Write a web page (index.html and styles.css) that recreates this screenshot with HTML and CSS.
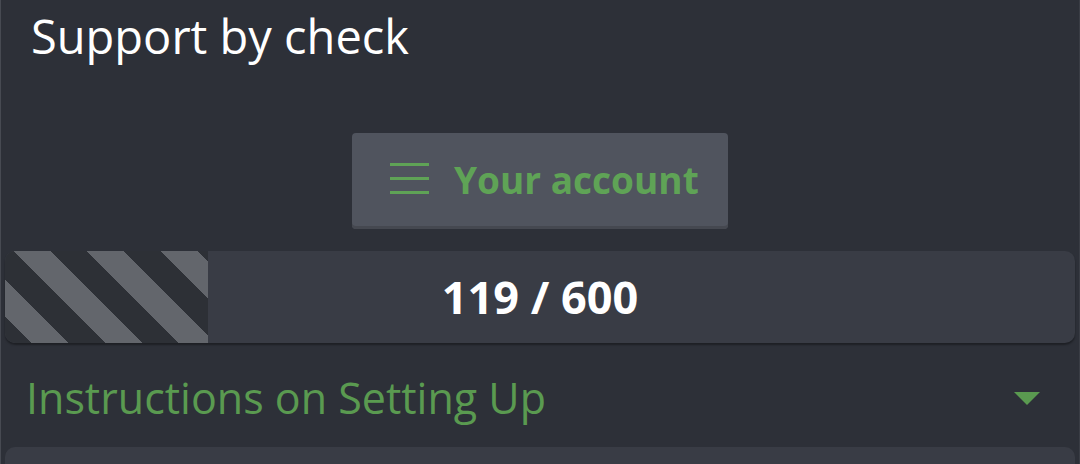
FILE: index.html
```html
<!doctype html>
<html lang="en">

<head>
  <meta charset="UTF-8">
  <meta name="viewport" content="width=device-width, initial-scale=1.0">
  <title>Support by check</title>
  <link rel="stylesheet" href="styles.css">
</head>

<body>
  <main class="page">
    <h1 class="title">Support by check</h1>

    <div class="account-row">
      <button class="account-btn">
        <svg class="menu-icon" width="39" height="32" viewBox="0 0 39 32">
          <rect x="0" y="0" width="39" height="3" fill="currentColor" />
          <rect x="0" y="14" width="39" height="3" fill="currentColor" />
          <rect x="0" y="28" width="39" height="3" fill="currentColor" />
        </svg>
        <span>Your account</span>
      </button>
    </div>

    <div class="progress">
      <div class="progress-fill" style="width: 19%"></div>
      <span class="progress-label">119 / 600</span>
    </div>

    <div class="section-head">
      <h2>Instructions on Setting Up</h2>
      <span class="caret"></span>
    </div>

    <div class="card"></div>
  </main>
</body>
</html>
```

FILE: styles.css
```css
html,
body {
  margin: 0;
  height: 100%;
  overflow: hidden;
}

body {
  background: #2d3038;
  font-family: "Open Sans", "Noto Sans", sans-serif;
}

.page {
  min-height: 100%;
  border-left: 1px solid #474a52;
  border-right: 1px solid #3a3d45;
  padding: 0 4px;
}

.title {
  margin: 0;
  padding: 5px 0 0 26px;
  font-size: 47px;
  font-weight: 400;
  line-height: 1.36;
  color: #ffffff;
}

.account-row {
  display: flex;
  justify-content: center;
  padding-top: 64px;
}

.account-btn {
  display: flex;
  align-items: center;
  gap: 25px;
  width: 376px;
  height: 96px;
  padding: 0 0 3px 38px;
  border: none;
  border-radius: 4px;
  background: #50545e;
  box-shadow: inset 0 -3px 0 #454850;
  color: #5fa356;
  font-family: inherit;
  font-size: 37px;
  font-weight: 700;
}

.menu-icon {
  flex: none;
}

.progress {
  position: relative;
  display: flex;
  align-items: center;
  justify-content: center;
  height: 92px;
  margin-top: 22px;
  border-radius: 10px;
  background: #393c45;
  box-shadow: 0 2px 2px rgba(0, 0, 0, 0.35);
  overflow: hidden;
}

.progress-fill {
  position: absolute;
  left: 0;
  top: 0;
  bottom: 0;
  background: repeating-linear-gradient(45deg,
      #2d3036 0, #2d3036 19px,
      #63666c 19px, #63666c 45px,
      #2d3036 45px, #2d3036 52px);
}

.progress-label {
  position: relative;
  color: #ffffff;
  font-size: 45px;
  font-weight: 700;
}

.section-head {
  display: flex;
  align-items: center;
  justify-content: space-between;
  padding: 26px 35px 20px 21px;
}

.section-head h2 {
  margin: 0;
  font-size: 43px;
  font-weight: 400;
  line-height: 1.36;
  color: #5a9a50;
}

.caret {
  width: 0;
  height: 0;
  border-left: 13px solid transparent;
  border-right: 13px solid transparent;
  border-top: 13px solid #5a9a50;
}

.card {
  height: 80px;
  border-radius: 10px;
  background: #393c45;
}
```
